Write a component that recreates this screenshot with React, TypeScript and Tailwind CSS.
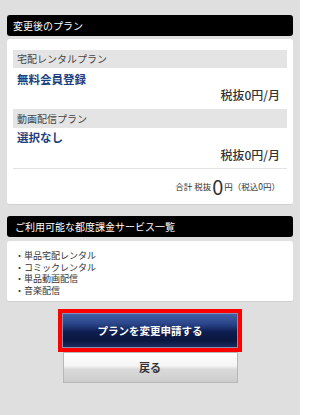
import React from "react";

const font = { fontFamily: '"Noto Sans CJK JP", "Noto Sans", sans-serif' };

export default function App() {
  return (
    <div
      className="w-[300px] h-[415px] bg-[#dfdfdf] px-[7px] pt-[15px] text-[#333] overflow-hidden"
      style={font}
    >
      {/* Section 1 header */}
      <div className="h-[21px] bg-black rounded-[3px] text-white text-[10px] leading-[21px] pl-[6px]">
        変更後のプラン
      </div>
      <div className="mt-[3px] bg-white rounded-[3px] border-b border-[#cfcfcf] px-[6px] pt-[11px]">
        <div className="h-[18px] bg-[#e4e4e4] text-[10px] leading-[18px] pl-[4px] text-[#444]">
          宅配レンタルプラン
        </div>
        <div className="pt-[3px] text-[11.5px] leading-[17px] font-bold text-[#213f7e] pl-[4px]">
          無料会員登録
        </div>
        <div className="text-right text-[12px] leading-[14px] font-medium text-[#333] pr-[7px]">
          税抜0円/月
        </div>
        <div className="mt-[7px] h-[19px] bg-[#e4e4e4] text-[10px] leading-[19px] pl-[4px] text-[#444]">
          動画配信プラン
        </div>
        <div className="text-[11.5px] leading-[19px] font-bold text-[#213f7e] pl-[4px]">
          選択なし
        </div>
        <div className="text-right text-[12px] leading-[16px] font-medium text-[#333] pr-[7px]">
          税抜0円/月
        </div>
        <div className="mt-[5px] h-px bg-[#e2e2e2]" />
        <div className="h-[35px] flex items-center justify-end pr-[7px] text-[#333]">
          <span className="text-[8.5px]">合計 税抜</span>
          <span className="text-[20px] leading-[20px] mx-[1px]">0</span>
          <span className="text-[8.5px]">円（税込0円）</span>
        </div>
      </div>

      {/* Section 2 */}
      <div className="mt-[11px] h-[21px] bg-black rounded-[3px] text-white text-[10px] leading-[21px] pl-[8px]">
        ご利用可能な都度課金サービス一覧
      </div>
      <div className="mt-[4px] bg-white rounded-[3px] border-b border-[#cfcfcf] pl-[8px] pt-[9px] pb-[5px] text-[9px] leading-[11.5px] text-[#333]">
        <div>・単品宅配レンタル</div>
        <div>・コミックレンタル</div>
        <div>・単品動画配信</div>
        <div>・音楽配信</div>
      </div>

      {/* Buttons */}
      <div className="mt-[7px] flex flex-col items-center">
        <div className="w-[184px] border-[4px] border-[#ff0000] bg-[#ff0000]">
          <div className="h-[35px] border border-[#8090b8] bg-[linear-gradient(to_bottom,#4261a8_0%,#2a4589_30%,#0d1d4f_55%,#0a1740_80%,#1a2a5e_100%)] text-white text-[10.5px] font-bold flex items-center justify-center">
            プランを変更申請する
          </div>
        </div>
        <div className="w-[175px] h-[31px] border border-[#b8b8b8] bg-[linear-gradient(to_bottom,#ffffff_0%,#f4f4f4_45%,#dadada_55%,#cdcdcd_100%)] text-[#333] text-[11px] font-bold flex items-center justify-center">
          戻る
        </div>
      </div>
    </div>
  );
}
